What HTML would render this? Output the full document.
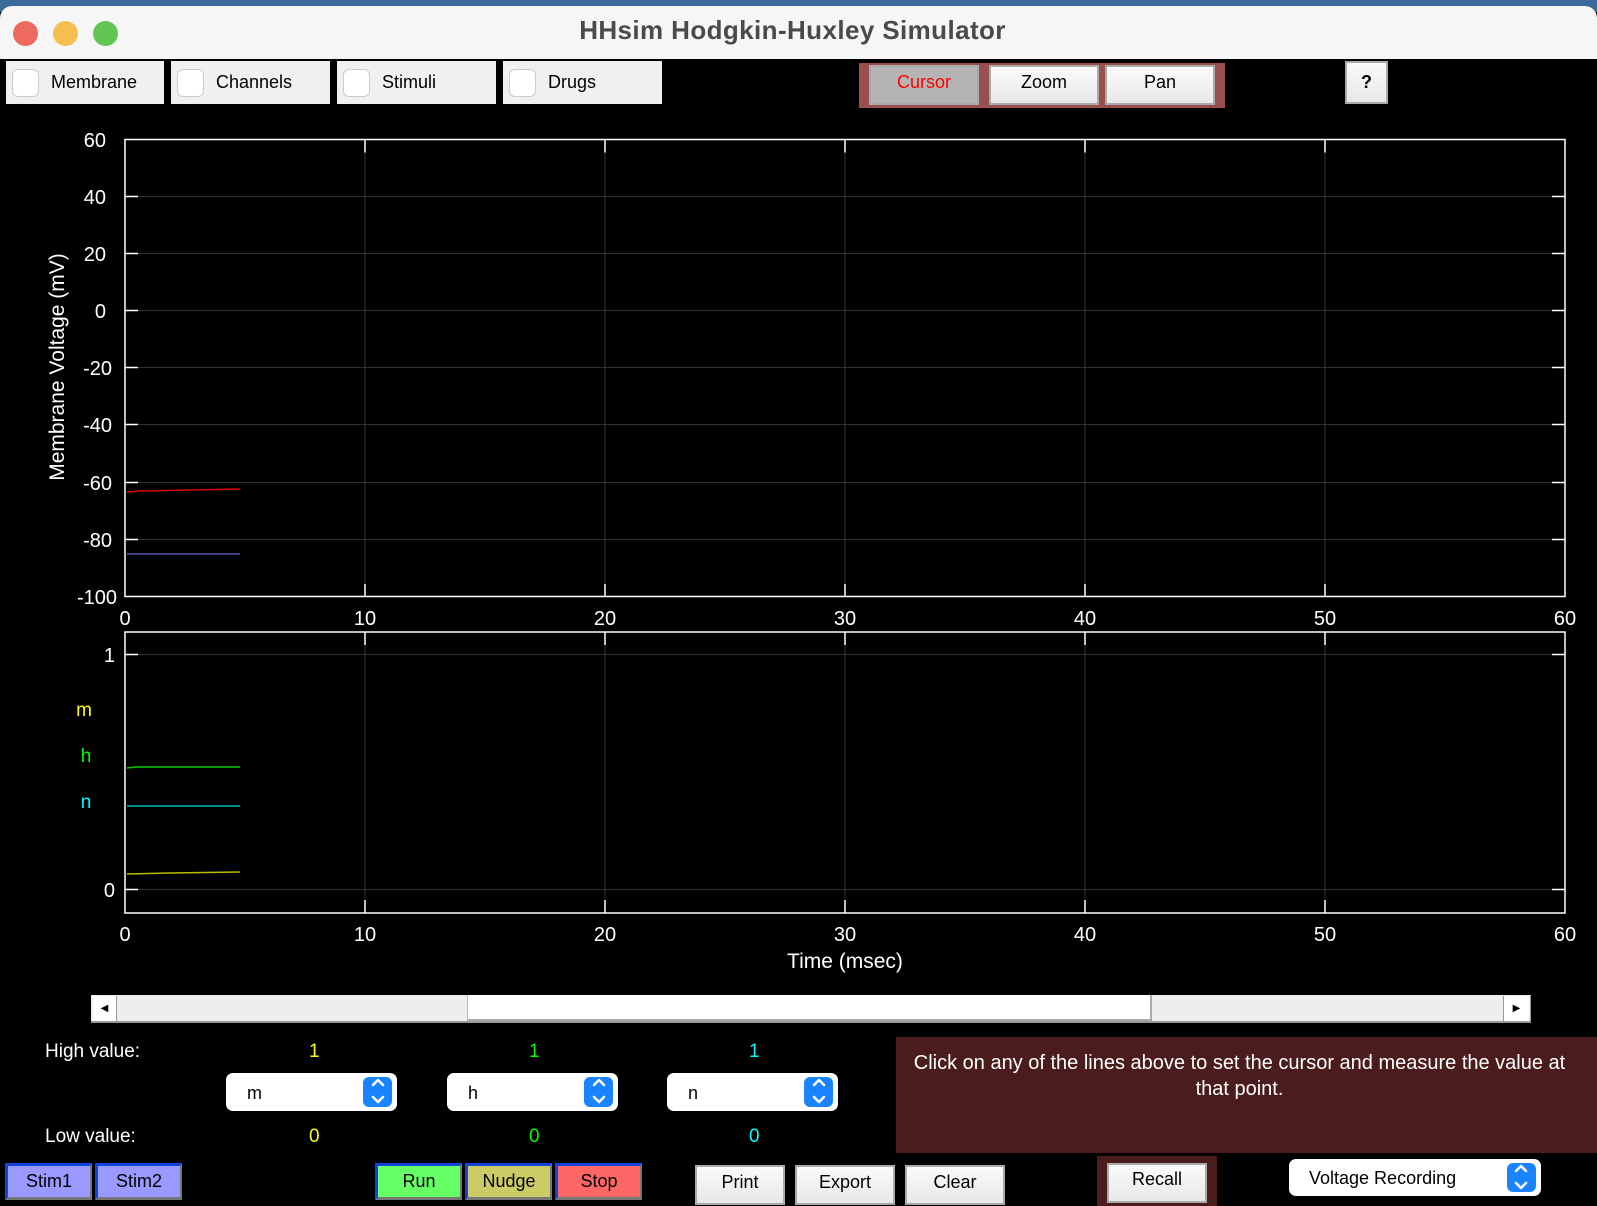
<!DOCTYPE html>
<html><head><meta charset="utf-8"><style>
*{box-sizing:border-box;margin:0;padding:0}
body{width:1597px;height:1200px;overflow:hidden;background:#000;font-family:"Liberation Sans",Arial,sans-serif;position:relative}
.desk{position:absolute;left:0;top:0;width:1597px;height:12px;background:#3a6a9a}
.win{position:absolute;left:0;top:6px;width:1597px;height:1194px;background:#000;border-radius:12px 12px 0 0;overflow:hidden}
.title{position:absolute;left:0;top:0;width:100%;height:53px;background:#f6f6f6;text-align:center;font-weight:bold;font-size:26px;letter-spacing:0.4px;color:#4a4a4a;line-height:48px;padding-right:12px}
.dot{position:absolute;top:15px;width:25px;height:25px;border-radius:50%}
.a{position:absolute}
.chk{position:absolute;top:61px;height:43px;background:#f0f0f0;font-size:18px;line-height:43px;color:#000}
.chk i{position:absolute;left:6px;top:8px;width:27px;height:28px;border:1px solid #ccc;border-radius:6px;background:#fff}
.chk span{position:absolute;left:45px}
.btn{position:absolute;background:linear-gradient(#fafafa,#e8e8e8);border:2px solid #aaa;font-size:18px;text-align:center;color:#000}
.cb{position:absolute;height:37px;font-size:18px;line-height:31px;text-align:center;color:#000;border-top:3px solid #1144dd;border-left:3px solid #1144dd;border-right:2px solid #777;border-bottom:3px solid #777}
.dd{position:absolute;background:#fff;border-radius:7px;font-size:18px;color:#000}
.dd b{position:absolute;right:5px;top:4px;width:29px;bottom:4px;background:#1a84ff;border-radius:6px}
.t{position:absolute;font-size:19px;color:#fff}
</style></head><body>
<div class="desk"></div>
<div class="win">
<div class="title">HHsim Hodgkin-Huxley Simulator
<div class="dot" style="left:13px;background:#ee6a5e"></div>
<div class="dot" style="left:53px;background:#f5bf4f"></div>
<div class="dot" style="left:93px;background:#61c554"></div>
</div>
</div>
<div class="chk" style="left:6px;width:158px"><i></i><span>Membrane</span></div>
<div class="chk" style="left:171px;width:159px"><i></i><span>Channels</span></div>
<div class="chk" style="left:337px;width:159px"><i></i><span>Stimuli</span></div>
<div class="chk" style="left:503px;width:159px"><i></i><span>Drugs</span></div>
<div class="a" style="left:859px;top:63px;width:366px;height:45px;background:#9a4f4f"></div>
<div class="btn" style="left:869px;top:65px;width:110px;height:40px;line-height:31px;background:#b4b4b4;color:#f00">Cursor</div>
<div class="btn" style="left:989px;top:65px;width:110px;height:40px;line-height:31px">Zoom</div>
<div class="btn" style="left:1105px;top:65px;width:110px;height:40px;line-height:31px">Pan</div>
<div class="btn" style="left:1345px;top:61px;width:43px;height:43px;line-height:38px;font-weight:bold">?</div>

<svg class="a" style="left:0;top:0" width="1597" height="1000" font-family="Liberation Sans, Arial, sans-serif" fill="#fff">
<g stroke="#333" stroke-width="1">
<path d="M125 196.5H1565M125 253.5H1565M125 310.5H1565M125 367.5H1565M125 424.5H1565M125 482.5H1565M125 539.5H1565"/>
<path d="M365 139V597M605 139V597M845 139V597M1085 139V597M1325 139V597"/>
<path d="M125 654.5H1565M125 889.5H1565M365 632V913M605 632V913M845 632V913M1085 632V913M1325 632V913"/>
</g>
<g stroke="#fff" stroke-width="1.5" fill="none">
<rect x="125" y="139.5" width="1440" height="457"/>
<rect x="125" y="632" width="1440" height="281"/>
<path d="M125 196.5h13M125 253.5h13M125 310.5h13M125 367.5h13M125 424.5h13M125 482.5h13M125 539.5h13M1565 196.5h-13M1565 253.5h-13M1565 310.5h-13M1565 367.5h-13M1565 424.5h-13M1565 482.5h-13M1565 539.5h-13"/>
<path d="M365 139.5v13M605 139.5v13M845 139.5v13M1085 139.5v13M1325 139.5v13M365 597v-13M605 597v-13M845 597v-13M1085 597v-13M1325 597v-13"/>
<path d="M125 654.5h13M125 889.5h13M1565 654.5h-13M1565 889.5h-13M365 632v13M605 632v13M845 632v13M1085 632v13M1325 632v13M365 913v-13M605 913v-13M845 913v-13M1085 913v-13M1325 913v-13"/>
</g>
<g stroke-width="1.5" fill="none">
<path d="M127 492L140 491L240 489" stroke="#d00"/>
<path d="M127 554H240" stroke="#55a"/>
<path d="M127 768L136 767H240" stroke="#0c0"/>
<path d="M127 806H240" stroke="#0bb"/>
<path d="M127 874L170 873L240 872" stroke="#bb0"/>
</g>
<g font-size="20" text-anchor="end">
<text x="106" y="147">60</text><text x="106" y="204">40</text><text x="106" y="261">20</text><text x="106" y="318">0</text>
<text x="112" y="375">-20</text><text x="112" y="432">-40</text><text x="112" y="490">-60</text><text x="112" y="547">-80</text><text x="117" y="604">-100</text>
<text x="115" y="662">1</text><text x="115" y="897">0</text>
</g>
<g font-size="20" text-anchor="middle">
<text x="125" y="625">0</text><text x="365" y="625">10</text><text x="605" y="625">20</text><text x="845" y="625">30</text><text x="1085" y="625">40</text><text x="1325" y="625">50</text><text x="1565" y="625">60</text>
<text x="125" y="941">0</text><text x="365" y="941">10</text><text x="605" y="941">20</text><text x="845" y="941">30</text><text x="1085" y="941">40</text><text x="1325" y="941">50</text><text x="1565" y="941">60</text>
<text x="845" y="968" font-size="21">Time (msec)</text>
<text x="84" y="716" fill="#ff0" font-size="19">m</text><text x="86" y="762" fill="#0f0" font-size="19">h</text><text x="86" y="808" fill="#0ff" font-size="19">n</text>
<text transform="translate(64 367) rotate(-90)" font-size="21">Membrane Voltage (mV)</text>
</g>
</svg>

<div class="a" style="left:91px;top:995px;width:1440px;height:28px;background:#eee;border-bottom:2px solid #999;border-right:1px solid #999"></div>
<div class="a" style="left:93px;top:996px;width:24px;height:25px;background:#fff;border-right:1px solid #999;font-size:10px;text-align:center;line-height:25px">◀</div>
<div class="a" style="left:1503px;top:996px;width:26px;height:25px;background:#fff;border-left:1px solid #999;font-size:10px;text-align:center;line-height:25px">▶</div>
<div class="a" style="left:467px;top:995px;width:685px;height:26px;background:#fff;border-left:1px solid #bbb;border-right:2px solid #aaa;border-bottom:2px solid #aaa"></div>

<div class="t" style="left:45px;top:1041px">High value:</div>
<div class="t" style="left:45px;top:1126px">Low value:</div>
<div class="t" style="left:309px;top:1041px;color:#ff0">1</div>
<div class="t" style="left:529px;top:1041px;color:#0f0">1</div>
<div class="t" style="left:749px;top:1041px;color:#0ff">1</div>
<div class="t" style="left:309px;top:1126px;color:#ff0">0</div>
<div class="t" style="left:529px;top:1126px;color:#0f0">0</div>
<div class="t" style="left:749px;top:1126px;color:#0ff">0</div>
<div class="dd" style="left:226px;top:1073px;width:171px;height:38px;line-height:40px;padding-left:21px">m<b></b></div>
<div class="dd" style="left:447px;top:1073px;width:171px;height:38px;line-height:40px;padding-left:21px">h<b></b></div>
<div class="dd" style="left:667px;top:1073px;width:171px;height:38px;line-height:40px;padding-left:21px">n<b></b></div>

<div class="a" style="left:896px;top:1037px;width:701px;height:116px;background:#4a1c1c;color:#fff;font-size:20px;text-align:center;line-height:26px;padding:13px 14px 0 0">Click on any of the lines above to set the cursor and measure the value at<br>that point.</div>

<div class="cb" style="left:5px;top:1163px;width:87px;background:#9999ff">Stim1</div>
<div class="cb" style="left:95px;top:1163px;width:87px;background:#9999ff">Stim2</div>
<div class="cb" style="left:375px;top:1163px;width:87px;background:#66ff66">Run</div>
<div class="cb" style="left:465px;top:1163px;width:87px;background:#cccc66">Nudge</div>
<div class="cb" style="left:555px;top:1163px;width:87px;background:#ff6666">Stop</div>
<div class="btn" style="left:695px;top:1165px;width:90px;height:40px;line-height:30px">Print</div>
<div class="btn" style="left:795px;top:1165px;width:100px;height:40px;line-height:30px">Export</div>
<div class="btn" style="left:905px;top:1165px;width:100px;height:40px;line-height:30px">Clear</div>
<div class="a" style="left:1097px;top:1156px;width:120px;height:50px;background:#4a1c1c"></div>
<div class="btn" style="left:1107px;top:1163px;width:100px;height:40px;line-height:28px">Recall</div>
<div class="dd" style="left:1289px;top:1159px;width:252px;height:37px;line-height:38px;padding-left:20px">Voltage Recording<b></b></div>
<svg class="a" style="left:0;top:0" width="1597" height="1200" fill="none" stroke="#fff" stroke-width="2.5" stroke-linecap="round" stroke-linejoin="round">
<path d="M373 1085l5-5 5 5M373 1097l5 5 5-5"/>
<path d="M594 1085l5-5 5 5M594 1097l5 5 5-5"/>
<path d="M814 1085l5-5 5 5M814 1097l5 5 5-5"/>
<path d="M1516 1171l5-5 5 5M1516 1183l5 5 5-5"/>
</svg>
</body></html>
